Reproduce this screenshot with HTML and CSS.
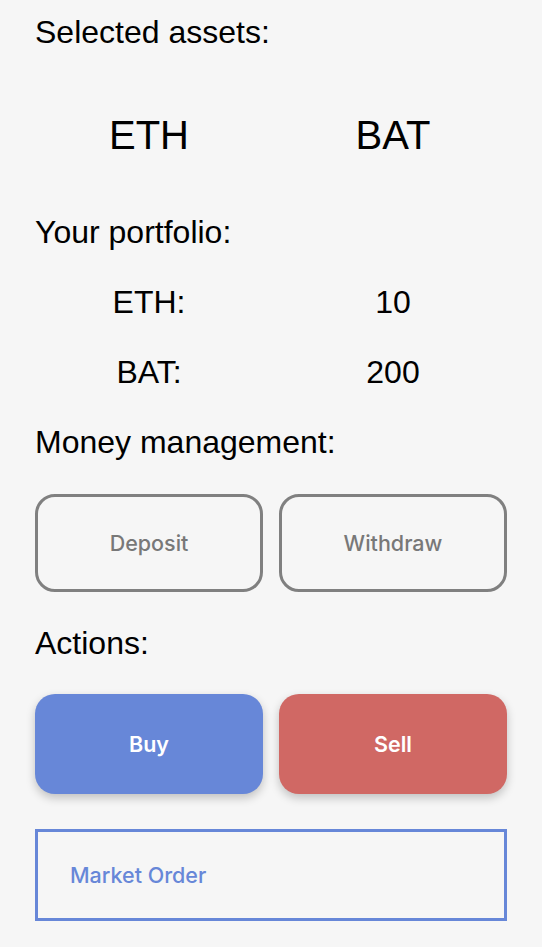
FILE: index.html
```html
<!DOCTYPE html>
<html lang="en">
<head>
<meta charset="utf-8">
<title>Trade</title>
<link rel="stylesheet" href="styles.css">
</head>
<body>
<main class="page">
  <h2 class="label">Selected assets:</h2>
  <div class="pair assets">
    <div class="cell">ETH</div>
    <div class="cell">BAT</div>
  </div>

  <h2 class="label portfolio-label">Your portfolio:</h2>
  <div class="pair holding">
    <div class="cell">ETH:</div>
    <div class="cell">10</div>
  </div>
  <div class="pair holding">
    <div class="cell">BAT:</div>
    <div class="cell">200</div>
  </div>

  <h2 class="label section-label">Money management:</h2>
  <div class="pair buttons money">
    <button class="btn outline">Deposit</button>
    <button class="btn outline">Withdraw</button>
  </div>

  <h2 class="label section-label">Actions:</h2>
  <div class="pair buttons actions">
    <button class="btn buy">Buy</button>
    <button class="btn sell">Sell</button>
  </div>

  <div class="order-type">Market Order</div>
</main>
</body>
</html>
```

FILE: styles.css
```css
html, body {
  margin: 0;
  padding: 0;
}

body {
  background: #f6f6f6;
  color: #000;
  font-family: "Liberation Sans", Arial, sans-serif;
}

.page {
  padding: 14px 35px 0;
}

.label {
  margin: 0;
  font-size: 32px;
  line-height: 37px;
  font-weight: 400;
}

.pair {
  display: grid;
  grid-template-columns: 1fr 1fr;
  column-gap: 16px;
}

.cell {
  text-align: center;
}

.assets {
  margin-top: 61px;
  font-size: 40px;
  line-height: 46px;
}

.portfolio-label {
  margin-top: 56px;
}

.holding {
  margin-top: 33px;
  font-size: 32px;
  line-height: 37px;
}

.section-label {
  margin-top: 33px;
}

.buttons {
  margin-top: 33px;
}

.btn {
  box-sizing: border-box;
  margin: 0;
  font-family: Inter, "Noto Sans", sans-serif;
  font-size: 21.5px;
  border-radius: 20px;
  cursor: pointer;
}

.outline {
  height: 98px;
  background: transparent;
  border: 3px solid #808080;
  color: #787878;
  font-weight: 500;
}

.actions {
  margin-top: 32px;
}

.buy, .sell {
  height: 100px;
  border: none;
  color: #fff;
  font-weight: 600;
  box-shadow: 0 4px 10px rgba(0, 0, 0, 0.22);
}

.buy {
  background: #6787d8;
}

.sell {
  background: #d06864;
}

.order-type {
  box-sizing: border-box;
  margin-top: 35px;
  height: 92px;
  border: 3px solid #6787d8;
  padding: 0 32px;
  display: flex;
  align-items: center;
  font-family: Inter, "Noto Sans", sans-serif;
  font-size: 21.5px;
  font-weight: 500;
  color: #6787d8;
}
```
